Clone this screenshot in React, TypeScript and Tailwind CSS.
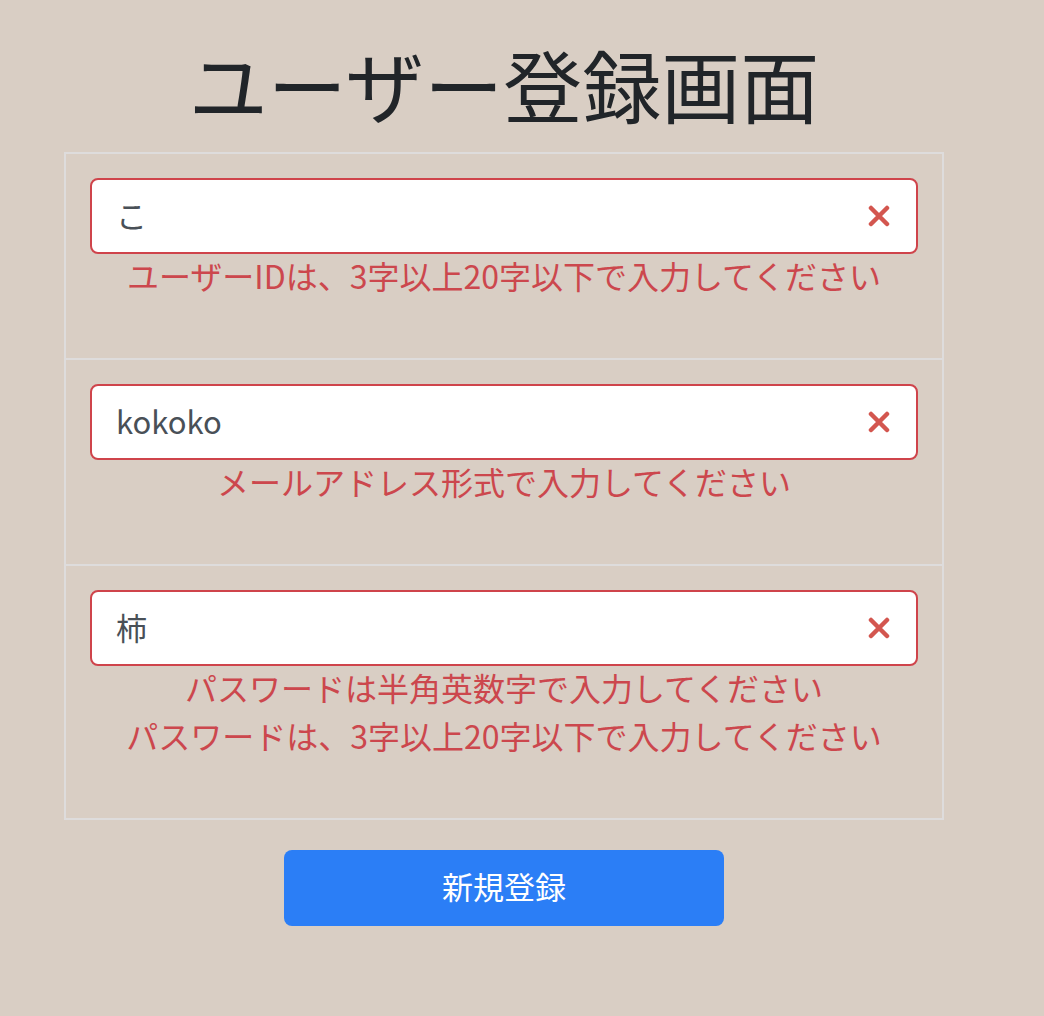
import { useState } from 'react'

type Field = {
  name: string
  type: string
  value: string
  errors: string[]
}

const fields: Field[] = [
  { name: 'userId', type: 'text', value: 'こ', errors: ['ユーザーIDは、3字以上20字以下で入力してください'] },
  { name: 'email', type: 'text', value: 'kokoko', errors: ['メールアドレス形式で入力してください'] },
  {
    name: 'password',
    type: 'text',
    value: '柿',
    errors: ['パスワードは半角英数字で入力してください', 'パスワードは、3字以上20字以下で入力してください'],
  },
]

function InvalidIcon() {
  return (
    <svg
      className="absolute right-[28px] top-1/2 -translate-y-1/2"
      width="22"
      height="22"
      viewBox="0 0 22 22"
      fill="none"
      stroke="#d3564f"
      strokeWidth="4.5"
      strokeLinecap="round"
    >
      <path d="M3 3l16 16M19 3L3 19" />
    </svg>
  )
}

export default function App() {
  const [values, setValues] = useState(fields.map((f) => f.value))

  return (
    <div className="min-h-screen bg-[#d9cec4] font-['Noto_Sans_CJK_JP','Noto_Sans',sans-serif]">
      <div className="ml-16 w-[880px] pt-[37px]">
        {/* Title */}
        <h1 className="text-center text-[79px] leading-[94px] text-[#212529] mb-[21px]">
          ユーザー登録画面
        </h1>

        {/* Form */}
        <form onSubmit={(e) => e.preventDefault()}>
          <div className="border-2 border-[#dedcdc] divide-y-2 divide-[#dedcdc]">
            {fields.map((field, i) => (
              <div key={field.name} className="px-6 pt-6 pb-[56px]">
                <div className="relative">
                  <input
                    name={field.name}
                    type={field.type}
                    value={values[i]}
                    onChange={(e) => {
                      const next = [...values]
                      next[i] = e.target.value
                      setValues(next)
                    }}
                    className="block h-[76px] w-full rounded-lg border-2 border-[#cf444b] bg-white pl-[24px] pr-16 pb-[3px] text-[31px] text-[#495057] outline-none"
                  />
                  <InvalidIcon />
                </div>
                {field.errors.map((err) => (
                  <p key={err} className="text-center text-[32px] leading-[42px] pb-[6px] text-[#cc474d]">
                    {err}
                  </p>
                ))}
              </div>
            ))}
          </div>

          <div className="flex justify-center pt-[30px]">
            <button
              type="submit"
              className="h-[76px] w-[440px] rounded-lg bg-[#2b7ef6] pb-1 text-[31px] text-white"
            >
              新規登録
            </button>
          </div>
        </form>
      </div>
    </div>
  )
}
